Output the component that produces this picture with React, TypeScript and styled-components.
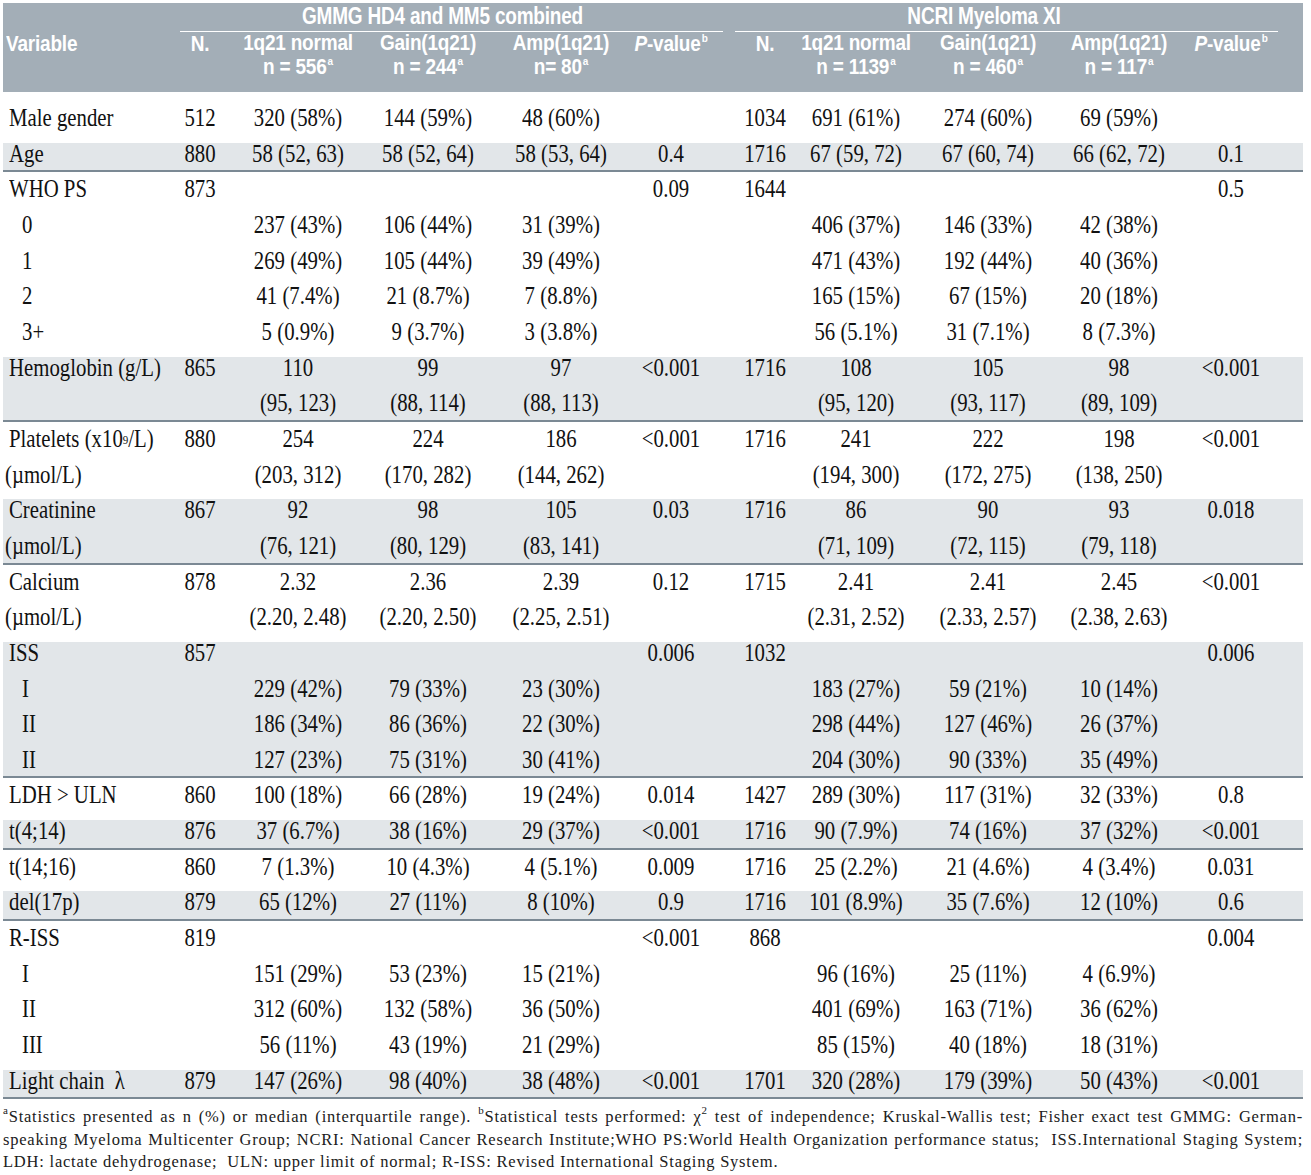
import * as React from 'react';
import styled, { createGlobalStyle, css } from 'styled-components';

const GlobalStyle = createGlobalStyle`
  html, body {
    margin: 0;
    padding: 0;
    background: #ffffff;
  }
`;

// table geometry, in page pixels
const TABLE_LEFT = 3;
const TABLE_RIGHT = 1303;
const VAR_W = 175;
const SPANS: [number, number][] = [
  [178, 222],
  [243, 353],
  [373, 483],
  [506, 616],
  [636, 706],
  [737, 793],
  [801, 911],
  [933, 1043],
  [1064, 1174],
  [1196, 1266],
];

const buildTemplate = () => {
  const tracks = [VAR_W];
  let cursor = TABLE_LEFT + VAR_W;
  SPANS.forEach(([a, b]) => {
    tracks.push(a - cursor, b - a);
    cursor = b;
  });
  tracks.push(TABLE_RIGHT - cursor);
  return tracks.map(t => `${t}px`).join(' ');
};

const TEMPLATE = buildTemplate();
const colLine = (i: number) => 2 * i + 3;

const ROW_H = 35.67;
const HEAD_BG = '#a3aeb7';
const SHADE = '#e2e6e9';
const RULE = '#7b8994';
const HEAD_STRETCH = 1.13;

const Page = styled.div`
  padding: 3px 0 0 ${TABLE_LEFT}px;
  width: ${TABLE_RIGHT - TABLE_LEFT}px;
`;

const Head = styled.div`
  display: grid;
  grid-template-columns: ${TEMPLATE};
  grid-template-rows: 29px 24px 21px 15px;
  background: ${HEAD_BG};
  color: #ffffff;
  font-family: 'Liberation Sans', Arial, sans-serif;
  font-weight: 700;
  font-size: 19px;
  letter-spacing: -0.2px;
  line-height: 1;
`;

// the printed header face is a tall condensed grotesque
const Tall = styled.span<{ $s?: number }>`
  display: inline-block;
  line-height: 0.85;
  transform: scaleY(${p => p.$s ?? HEAD_STRETCH});
  white-space: nowrap;
`;

// two stacked header lines (cohort name over its size)
const TallStack = styled(Tall)`
  text-align: center;
  line-height: ${24.2 / HEAD_STRETCH}px;
`;

const GroupTitle = styled.div<{ $from: number; $to: number; $ml: number; $mr: number; $pr: number }>`
  grid-row: 1;
  grid-column: ${p => p.$from} / ${p => p.$to};
  margin: 0 ${p => p.$mr}px 0 ${p => p.$ml}px;
  padding-right: ${p => p.$pr}px;
  border-bottom: 1.5px solid #ffffff;
  display: flex;
  align-items: center;
  justify-content: center;
`;

const HeadCell = styled.div<{ $rows: string; $col: number; $left?: boolean }>`
  grid-row: ${p => p.$rows};
  grid-column: ${p => p.$col};
  display: flex;
  align-items: center;
  justify-content: ${p => (p.$left ? 'flex-start' : 'center')};
  padding-left: ${p => (p.$left ? 3 : 0)}px;
  padding-top: 1px;
`;

const Sup = styled.sup`
  font-size: 10px;
  vertical-align: 8px;
  line-height: 0;
  margin-left: 1px;
`;

const Body = styled.div`
  padding-top: 9px;
  font-family: 'Liberation Serif', 'Times New Roman', serif;
  font-size: 20.8px;
  color: #111111;
`;

const Group = styled.div<{ $shaded: boolean }>`
  ${p =>
    p.$shaded &&
    css`
      background: linear-gradient(to bottom, transparent 6px, ${SHADE} 6px);
      box-shadow: inset 0 -2px 0 ${RULE};
    `}
`;

const Row = styled.div`
  display: grid;
  grid-template-columns: ${TEMPLATE};
  height: ${ROW_H}px;
`;

const Cell = styled.div<{ $col: number; $indent?: number }>`
  grid-column: ${p => p.$col};
  display: flex;
  align-items: center;
  justify-content: ${p => (p.$indent !== undefined ? 'flex-start' : 'center')};
  padding-left: ${p => p.$indent ?? 0}px;
  padding-bottom: 1px;
  white-space: nowrap;
  transform: scaleY(1.2);
`;

const BodySup = styled.sup`
  font-size: 11px;
  vertical-align: 8px;
  line-height: 0;
`;

const Notes = styled.div`
  margin-top: 7px;
  font-family: 'Liberation Serif', 'Times New Roman', serif;
  font-size: 16.5px;
  line-height: 22.5px;
  letter-spacing: 0.78px;
  color: #202020;
`;

const NoteLine = styled.div<{ $justify?: boolean }>`
  white-space: nowrap;
  ${p =>
    p.$justify &&
    css`
      white-space: normal;
      text-align: justify;
      text-align-last: justify;
    `}
`;

type Indent = 'main' | 'sub' | 'paren';
type RowData = { label: React.ReactNode; indent?: Indent; cells: string[] };
type GroupData = { shaded: boolean; rows: RowData[] };

const INDENTS: Record<Indent, number> = { main: 6, sub: 19, paren: 2 };

const r = (label: React.ReactNode, cells: string[], indent: Indent = 'main'): RowData => ({
  label,
  indent,
  cells,
});

const GROUPS: GroupData[] = [
  {
    shaded: false,
    rows: [r('Male gender', ['512', '320 (58%)', '144 (59%)', '48 (60%)', '', '1034', '691 (61%)', '274 (60%)', '69 (59%)', ''])],
  },
  {
    shaded: true,
    rows: [r('Age', ['880', '58 (52, 63)', '58 (52, 64)', '58 (53, 64)', '0.4', '1716', '67 (59, 72)', '67 (60, 74)', '66 (62, 72)', '0.1'])],
  },
  {
    shaded: false,
    rows: [
      r('WHO PS', ['873', '', '', '', '0.09', '1644', '', '', '', '0.5']),
      r('0', ['', '237 (43%)', '106 (44%)', '31 (39%)', '', '', '406 (37%)', '146 (33%)', '42 (38%)', ''], 'sub'),
      r('1', ['', '269 (49%)', '105 (44%)', '39 (49%)', '', '', '471 (43%)', '192 (44%)', '40 (36%)', ''], 'sub'),
      r('2', ['', '41 (7.4%)', '21 (8.7%)', '7 (8.8%)', '', '', '165 (15%)', '67 (15%)', '20 (18%)', ''], 'sub'),
      r('3+', ['', '5 (0.9%)', '9 (3.7%)', '3 (3.8%)', '', '', '56 (5.1%)', '31 (7.1%)', '8 (7.3%)', ''], 'sub'),
    ],
  },
  {
    shaded: true,
    rows: [
      r('Hemoglobin (g/L)', ['865', '110', '99', '97', '<0.001', '1716', '108', '105', '98', '<0.001']),
      r('', ['', '(95, 123)', '(88, 114)', '(88, 113)', '', '', '(95, 120)', '(93, 117)', '(89, 109)', '']),
    ],
  },
  {
    shaded: false,
    rows: [
      r(
        <>
          Platelets (x10<BodySup>9</BodySup>/L)
        </>,
        ['880', '254', '224', '186', '<0.001', '1716', '241', '222', '198', '<0.001'],
      ),
      r('(µmol/L)', ['', '(203, 312)', '(170, 282)', '(144, 262)', '', '', '(194, 300)', '(172, 275)', '(138, 250)', ''], 'paren'),
    ],
  },
  {
    shaded: true,
    rows: [
      r('Creatinine', ['867', '92', '98', '105', '0.03', '1716', '86', '90', '93', '0.018']),
      r('(µmol/L)', ['', '(76, 121)', '(80, 129)', '(83, 141)', '', '', '(71, 109)', '(72, 115)', '(79, 118)', ''], 'paren'),
    ],
  },
  {
    shaded: false,
    rows: [
      r('Calcium', ['878', '2.32', '2.36', '2.39', '0.12', '1715', '2.41', '2.41', '2.45', '<0.001']),
      r('(µmol/L)', ['', '(2.20, 2.48)', '(2.20, 2.50)', '(2.25, 2.51)', '', '', '(2.31, 2.52)', '(2.33, 2.57)', '(2.38, 2.63)', ''], 'paren'),
    ],
  },
  {
    shaded: true,
    rows: [
      r('ISS', ['857', '', '', '', '0.006', '1032', '', '', '', '0.006']),
      r('I', ['', '229 (42%)', '79 (33%)', '23 (30%)', '', '', '183 (27%)', '59 (21%)', '10 (14%)', ''], 'sub'),
      r('II', ['', '186 (34%)', '86 (36%)', '22 (30%)', '', '', '298 (44%)', '127 (46%)', '26 (37%)', ''], 'sub'),
      r('II', ['', '127 (23%)', '75 (31%)', '30 (41%)', '', '', '204 (30%)', '90 (33%)', '35 (49%)', ''], 'sub'),
    ],
  },
  {
    shaded: false,
    rows: [r('LDH > ULN', ['860', '100 (18%)', '66 (28%)', '19 (24%)', '0.014', '1427', '289 (30%)', '117 (31%)', '32 (33%)', '0.8'])],
  },
  {
    shaded: true,
    rows: [r('t(4;14)', ['876', '37 (6.7%)', '38 (16%)', '29 (37%)', '<0.001', '1716', '90 (7.9%)', '74 (16%)', '37 (32%)', '<0.001'])],
  },
  {
    shaded: false,
    rows: [r('t(14;16)', ['860', '7 (1.3%)', '10 (4.3%)', '4 (5.1%)', '0.009', '1716', '25 (2.2%)', '21 (4.6%)', '4 (3.4%)', '0.031'])],
  },
  {
    shaded: true,
    rows: [r('del(17p)', ['879', '65 (12%)', '27 (11%)', '8 (10%)', '0.9', '1716', '101 (8.9%)', '35 (7.6%)', '12 (10%)', '0.6'])],
  },
  {
    shaded: false,
    rows: [
      r('R-ISS', ['819', '', '', '', '<0.001', '868', '', '', '', '0.004']),
      r('I', ['', '151 (29%)', '53 (23%)', '15 (21%)', '', '', '96 (16%)', '25 (11%)', '4 (6.9%)', ''], 'sub'),
      r('II', ['', '312 (60%)', '132 (58%)', '36 (50%)', '', '', '401 (69%)', '163 (71%)', '36 (62%)', ''], 'sub'),
      r('III', ['', '56 (11%)', '43 (19%)', '21 (29%)', '', '', '85 (15%)', '40 (18%)', '18 (31%)', ''], 'sub'),
    ],
  },
  {
    shaded: true,
    rows: [r('Light chain\u00a0 λ', ['879', '147 (26%)', '98 (40%)', '38 (48%)', '<0.001', '1701', '320 (28%)', '179 (39%)', '50 (43%)', '<0.001'])],
  },
];

const COHORT_HEADS: { name: string; count: string }[][] = [
  [
    { name: '1q21 normal', count: 'n = 556' },
    { name: 'Gain(1q21)', count: 'n = 244' },
    { name: 'Amp(1q21)', count: 'n= 80' },
  ],
  [
    { name: '1q21 normal', count: 'n = 1139' },
    { name: 'Gain(1q21)', count: 'n = 460' },
    { name: 'Amp(1q21)', count: 'n = 117' },
  ],
];

const TableHead = () => (
  <Head>
    <GroupTitle $from={colLine(0)} $to={colLine(5)} $ml={2} $mr={14} $pr={18}>
      <Tall $s={1.22}>GMMG HD4 and MM5 combined</Tall>
    </GroupTitle>
    <GroupTitle $from={colLine(5)} $to={-1} $ml={-2} $mr={25} $pr={45}>
      <Tall $s={1.22}>NCRI Myeloma XI</Tall>
    </GroupTitle>
    <HeadCell $rows="2" $col={1} $left>
      <Tall>Variable</Tall>
    </HeadCell>
    {COHORT_HEADS.map((cohort, g) => {
      const base = g * 5;
      return (
        <React.Fragment key={g}>
          <HeadCell $rows="2" $col={colLine(base)}>
            <Tall>N.</Tall>
          </HeadCell>
          {cohort.map((c, k) => (
            <HeadCell key={c.name} $rows="2 / 4" $col={colLine(base + 1 + k)}>
              <TallStack>
                {c.name}
                <br />
                {c.count}
                <Sup>a</Sup>
              </TallStack>
            </HeadCell>
          ))}
          <HeadCell $rows="2" $col={colLine(base + 4)}>
            <Tall>
              <i>P</i>-value<Sup>b</Sup>
            </Tall>
          </HeadCell>
        </React.Fragment>
      );
    })}
  </Head>
);

const App = () => (
  <Page>
    <GlobalStyle />
    <TableHead />
    <Body>
      {GROUPS.map((group, g) => (
        <Group key={g} $shaded={group.shaded}>
          {group.rows.map((row, i) => (
            <Row key={i}>
              <Cell $col={1} $indent={INDENTS[row.indent ?? 'main']}>
                {row.label}
              </Cell>
              {row.cells.map((value, c) =>
                value ? (
                  <Cell key={c} $col={colLine(c)}>
                    {value}
                  </Cell>
                ) : null,
              )}
            </Row>
          ))}
        </Group>
      ))}
    </Body>
    <Notes>
      <NoteLine $justify>
        <BodySup>a</BodySup>Statistics presented as n (%) or median (interquartile range). <BodySup>b</BodySup>
        Statistical tests performed: χ<BodySup>2</BodySup> test of independence; Kruskal-Wallis test; Fisher exact test
        GMMG: German-
      </NoteLine>
      <NoteLine $justify>
        speaking Myeloma Multicenter Group; NCRI: National Cancer Research Institute;WHO PS:World Health Organization
        performance status;&nbsp; ISS.International Staging System;
      </NoteLine>
      <NoteLine>LDH: lactate dehydrogenase;&nbsp; ULN: upper limit of normal; R-ISS: Revised International Staging System.</NoteLine>
    </Notes>
  </Page>
);

export default App;
